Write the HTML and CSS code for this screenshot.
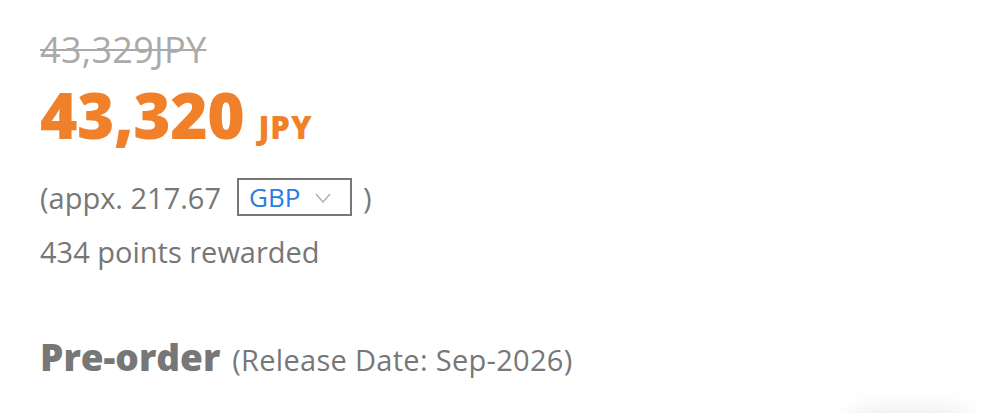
FILE: index.html
```html
<!DOCTYPE html>
<html lang="en">
<head>
  <meta charset="UTF-8">
  <meta name="viewport" content="width=device-width, initial-scale=1.0">
  <title>Price</title>
  <link rel="stylesheet" href="styles.css">
</head>
<body>
  <div class="price-box">
    <div class="old-price">43,329JPY</div>
    <div class="new-price">43,320 <span class="currency">JPY</span></div>

    <div class="appx">
      (appx. 217.67
      <span class="select">GBP
        <svg class="caret" width="16" height="10" viewBox="0 0 16 10"><path d="M1 1 L8 9 L15 1" fill="none" stroke="#aaa" stroke-width="1.2"/></svg>
      </span>
      )
    </div>
    <div class="points">434 points rewarded</div>

    <div class="status"><b>Pre-order</b> (Release Date: Sep-2026)</div>
  </div>

  <!-- floating button peeking in at the bottom -->
  <div class="float-btn"></div>
</body>
</html>
```

FILE: styles.css
```css
body { margin: 0; background: #fff; font-family: "Open Sans", "Noto Sans", sans-serif; color: #777; overflow: hidden; }
.price-box { padding: 30px 40px; }
.old-price { font-size: 36px; color: #aaa; text-decoration: line-through; text-decoration-thickness: 2px; line-height: 40px; letter-spacing: 0.3px; }
.new-price { font-size: 64px; font-weight: 800; color: #f0812a; line-height: 70px; margin-top: 10px; letter-spacing: -0.5px; }
.new-price .currency { font-size: 31px; font-weight: 800; line-height: 1; letter-spacing: 1px; margin-left: -2px; }
.appx { display: flex; align-items: center; font-size: 29px; margin-top: 28px; height: 38px; }
.select { display: inline-flex; align-items: center; justify-content: space-between; width: 115px; height: 38px; box-sizing: border-box; margin: 0 11px 0 16px; padding: 0 19px 0 10px; border: 2px solid #777; color: #2b7de0; font-size: 26px; }
.select .caret { margin-top: 2px; }
.points { font-size: 29px; line-height: 36px; margin-top: 18px; }
.status { font-size: 29px; line-height: 44px; margin-top: 65px; letter-spacing: 0.3px; }
.status b { font-size: 37px; font-weight: 800; margin-right: 4px; letter-spacing: 0; }
.float-btn { position: fixed; right: 20px; bottom: -70px; width: 140px; height: 70px; border-radius: 35px; background: #fff; box-shadow: 0 -4px 24px rgba(0,0,0,0.08); }
```
